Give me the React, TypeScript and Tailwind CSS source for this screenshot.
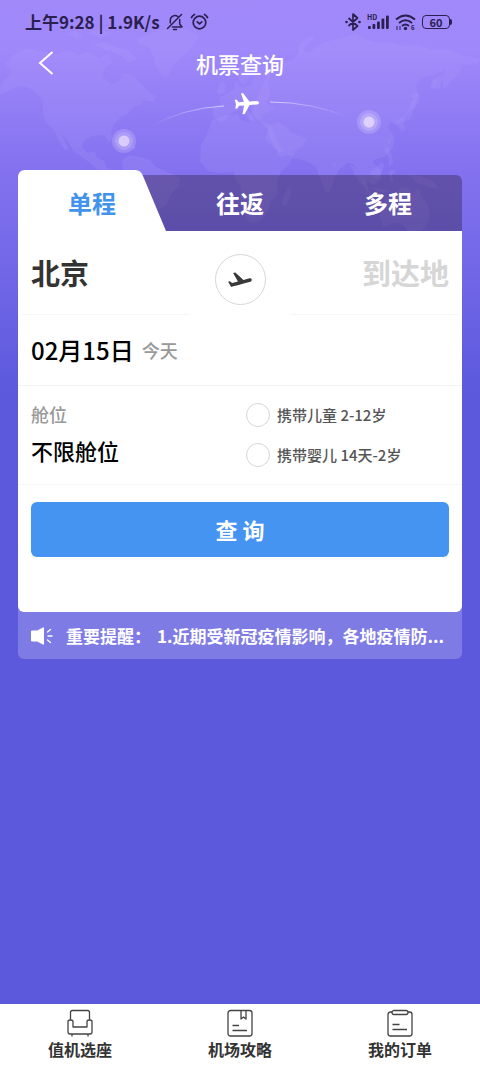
import { useState } from "react";

const TABS = ["单程", "往返", "多程"];

const PASSENGERS = [
  { id: "child", label: "携带儿童 2-12岁" },
  { id: "infant", label: "携带婴儿 14天-2岁" },
];

function WorldMap() {
  return (
    <svg viewBox="0 0 480 240" className="absolute inset-x-0 top-0 w-full" aria-hidden="true">
      <defs>
        <linearGradient id="arcLeft" x1="0" x2="1">
          <stop offset="0" stopColor="#fff" stopOpacity="0" />
          <stop offset="1" stopColor="#fff" stopOpacity="0.6" />
        </linearGradient>
        <linearGradient id="arcRight" x1="0" x2="1">
          <stop offset="0" stopColor="#fff" stopOpacity="0.6" />
          <stop offset="1" stopColor="#fff" stopOpacity="0" />
        </linearGradient>
      </defs>
      <g fill="#b9a8ff" fillOpacity="0.17">
        {/* north america */}
        <path d="M4 80l8-8-7-8 8-9 14-7 16 4 14 2 10-4 12 5 10-3 10 6 8-4 6 8-8 6-2 9 8 7 8-2 4-9 9 2 8 8 8 8 9 6-4 5-9-2-5 5-6 2-4 6-8 4-7 7-3 8 1 8-3 2-5-7-12 1-8 5-2 6 6 6 7-2 1 6 8 4 3 7 7 3-4 3-13-5-12-10-11-7-7-12-6-7 8 16-4 1-7-11-4-9-8-7-3-9 0-13-8-9-8-5-9-1-9 5-14 6z" />
        <path d="M66 34l9-3 8 4-6 4zM88 32l14-3 9 5-10 4zM92 44l12-2 12 5-8 4zM112 47l14 2 11 10-8 4-8-7-9-4z" />
        {/* greenland, iceland */}
        <path d="M138 38l20-8 26-1 16 6-6 10-10 10-9 8-6 12-5 2-7-8-4-12-4-10-10-3zM196 62l8-2 3 4-6 4z" />
        {/* caribbean */}
        <path d="M112 140l10 1 6 4-9 0zM130 146l7 1-3 3z" />
        {/* south america */}
        <path d="M122 160l8-5 10 2 9 2 6 7 12 6 13 6-1 8-8 8-5 12-9 5-4 9-6 6-3 10h-6l-1-22-6-14-9-10-3-9 4-9z" />
        {/* europe */}
        <path d="M213 116l-1-10 9-2-2-6 7-4 8-4 1-8 4 1 2 5 10-3 3-10-7 4-2 6-4-2-4-6 3-10 10-9 10-4 7 6 4 10-3 12 2 12-3 9 8 6-9 4-6 2 2 6-7-3-4-9-5-2 8 12-4 2-8-11-6 1-7 4-3 5-6 2zM216 92l5-10 4 2 1 8-6 3z" />
        {/* africa */}
        <path d="M212 120l14-5 12-1 3 6 10 3 10-2 9 3 5 12 6 12 5 6 9-2-5 11-10 10-3 10 1 11-7 8-4 11-8 9-9 1-6-11-4-14 1-11-6-9-1-6-13 1-13-2-8-10 1-16 6-11zM284 194l6-8 1 8-5 12-4-2z" />
        {/* arabia */}
        <path d="M268 126l10-4 10 7 5 5 14 4-5 9-14 8-9 2-5-12-6-11z" />
        {/* asia */}
        <path d="M270 70l8-9 14-1 8-9 9 2 9-8 14-5 13-3 10-4 10 6 12 4 14-1 12 4 16-1 14 5 16 0 14 5 18 4-4 5-15 1-2 8-9 8-7 9-3-12 5-8-13 5-11 2-6 9 4 12-5 10-9 6-3 9 3 6-4 3-5-7-7-3-2 6 7 9-2 11-9 9-8 2-4 3 9 8 0 9-8 6-6-5 1 8 5 10-5-3-5-11-4-11-6-9-6-1-9 8-6 14-3 8-4-2-5-14-4-10-9-6-14-3-8-6-7-1-5-4-8-8 3-9-8-9-8 2-4-5z" />
        <path d="M298 52l2-9 10-7 5 1-9 9-3 8zM430 88l3-9 4 1-3 9zM410 119l-6 3-8 2-2-3 9-4 6-8 3-9 5-2-2 9zM411 96l4-4 5 4-6 3zM387 141l3-3 0 7zM384 150l4-4 4 9 1 9-4 2 0-7zM333 162l3 3-2 4z" />
        {/* indonesia, oceania */}
        <path d="M350 164l7 6 8 13 0 5-8-9zM368 187l14 2 9 2-10 1zM370 172l6-4 6-6 2 4-4 12-8 0zM389 171l7-1-4 5 2 8-4-2zM410 175l9 1 12 4 9 9-8-1-8-3-7-2z" />
        <path d="M381 205l6-6 8-5 7-7 7 1 4 7 5-8 4 10 6 8 2 12-5 11-8 6-9-2-5-8-9-1-11 4-3-10zM433 80l9-5-2 14-6-1z" />
      </g>
      <path d="M148 128Q182 108 224 106" fill="none" stroke="url(#arcLeft)" />
      <path d="M270 102Q312 102 350 118" fill="none" stroke="url(#arcRight)" />
      <g fill="#e6dcff">
        <circle cx="124" cy="141" r="12" fillOpacity="0.22" />
        <circle cx="124" cy="141" r="9" fillOpacity="0.22" />
        <circle cx="124" cy="141" r="5.500" fillOpacity="0.75" />
        <circle cx="369" cy="122" r="12" fillOpacity="0.22" />
        <circle cx="369" cy="122" r="9" fillOpacity="0.25" />
        <circle cx="369" cy="122" r="5.500" fillOpacity="0.8" />
      </g>
      <path
        transform="translate(234 92) rotate(-4 12 12)"
        fill="#fff"
        d="M22.500 9.700c1.800 0 2.500.9 2.500 1.800s-.7 1.800-2.500 1.800h-7L10 22H7.700l2.300-8.700H5L3 16H1l1-4.500-1-4.500h2l2 2.700h5L7.700 1H10l5.500 8.700z"
      />
    </svg>
  );
}

function StatusBar() {
  return (
    <div className="flex h-11 items-center justify-between pr-7 pl-[25px] text-[#2a2050]">
      <div className="flex items-center gap-1.5">
        <span className="text-[17px] font-bold whitespace-nowrap">上午9:28 | 1.9K/s</span>
        <svg width="18" height="18" viewBox="0 0 18 18" fill="none" stroke="currentColor" strokeWidth="1.500" strokeLinecap="round" strokeLinejoin="round" aria-hidden="true">
          <path d="M15.500 1.500L1.500 15.500M4.300 10V7.500a4.700 4.700 0 0 1 7.500-4M13.700 6.500V11l2.300 3H6.500M7.500 16.500h3" />
        </svg>
        <svg width="19" height="18" viewBox="0 0 19 18" fill="none" stroke="currentColor" strokeWidth="1.700" strokeLinecap="round" strokeLinejoin="round" aria-hidden="true">
          <circle cx="9.500" cy="9.500" r="6.300" />
          <path d="M1.500 4.500Q2.500 2.500 4.500 1.500M17.500 4.500Q16.500 2.500 14.500 1.500M7.200 8.800l2.300 2 2.300-2" />
        </svg>
      </div>
      <div className="flex items-center gap-1.5">
        <svg width="16" height="18" viewBox="0 0 16 18" fill="none" stroke="currentColor" strokeWidth="1.700" strokeLinejoin="round" aria-hidden="true">
          <path d="M3.500 5l9 8L8 17V1l4.500 4-9 8" />
          <circle cx="1.500" cy="9" r="1.300" fill="currentColor" stroke="none" />
          <circle cx="14.500" cy="9" r="1.300" fill="currentColor" stroke="none" />
        </svg>
        <svg width="22" height="18" viewBox="0 0 22 18" fill="currentColor" aria-hidden="true">
          <text x="0" y="7" fontSize="7" fontWeight="700">HD</text>
          <rect x="1" y="13" width="2.800" height="3" rx="1" />
          <rect x="5.500" y="11" width="2.800" height="5" rx="1" />
          <rect x="10" y="8.500" width="2.800" height="7.500" rx="1" />
          <rect x="14.500" y="5.500" width="2.800" height="10.500" rx="1" />
          <rect x="19" y="2.500" width="2.800" height="13.500" rx="1" />
        </svg>
        <svg width="21" height="18" viewBox="0 0 21 18" fill="none" stroke="currentColor" strokeWidth="2" aria-hidden="true">
          <path d="M1 6.500Q10.500-1.500 20 6.500M4 10q6.500-5.500 13 0M7 13q3.500-3 7 0" />
          <circle cx="10.500" cy="15.500" r="1.700" fill="currentColor" stroke="none" />
          <path d="M2 13v4M5 13v4" strokeWidth="1" />
          <text x="16" y="17" fontSize="6" fontWeight="700" fill="currentColor" stroke="none">6</text>
        </svg>
        <div className="flex items-center">
          <div className="flex h-3.5 w-7 items-center justify-center rounded border border-current text-[11px] leading-none font-bold">
            60
          </div>
          <div className="h-1.5 w-0.5 rounded-r bg-current" />
        </div>
      </div>
    </div>
  );
}

function TripTabs() {
  const [active] = useState(0);

  return (
    <div role="tablist" className="grid grid-cols-3 items-end text-2xl font-bold text-white">
      {TABS.map((tab, i) =>
        i === active ? (
          <button key={tab} type="button" role="tab" aria-selected="true" className="relative h-[61px] pt-1 text-[#4293ec]">
            <svg viewBox="0 0 148 61" preserveAspectRatio="none" className="absolute inset-0 h-full w-full" aria-hidden="true">
              <path d="M110 5H148V61H110z" fill="#322346" fillOpacity="0.4" />
              <path d="M0 61V8Q0 0 7 0H117Q123 0 125 6L148 61z" fill="#fff" />
            </svg>
            <span className="relative">{tab}</span>
          </button>
        ) : (
          <button
            key={tab}
            type="button"
            role="tab"
            aria-selected="false"
            className="h-14 bg-[#322346]/40 last:rounded-tr-md"
          >
            {tab}
          </button>
        )
      )}
    </div>
  );
}

function SearchCard() {
  return (
    <form className="rounded-b-md bg-white pb-[55px]" onSubmit={(e) => e.preventDefault()}>
      {/* Route */}
      <div className="flex h-[84px] px-1">
        <button type="button" className="flex-1 border-b border-[#f6f6f6] pl-[9px] text-left text-[29px] font-bold text-[#333]">
          北京
        </button>
        <div className="flex w-[102px] items-end justify-center pb-2.5">
          <button type="button" aria-label="交换城市" className="flex size-[51px] items-center justify-center rounded-full border border-[#d6d6d6]">
            <svg width="28" height="28" viewBox="0 0 24 24" fill="#3a3a3a" aria-hidden="true">
              <path d="M22.070 11.640c-.21-.8-1.040-1.280-1.840-1.060L14.920 12l-6.900-6.430-1.930.51 4.140 7.170-4.970 1.330-1.970-1.540-1.450.39 2.590 4.490s7.120-1.900 16.570-4.430c.81-.23 1.280-1.050 1.070-1.850z" />
            </svg>
          </button>
        </div>
        <button type="button" className="flex-1 border-b border-[#f6f6f6] pr-[9px] text-right text-[29px] font-bold text-[#d6d6d6]">
          到达地
        </button>
      </div>

      {/* Date */}
      <button type="button" className="flex h-[71px] w-full items-center gap-2 border-b border-[#f2f2f2] px-[13px] font-medium">
        <span className="text-2xl text-black">02月15日</span>
        <span className="text-lg text-[#999]">今天</span>
      </button>

      {/* Cabin and passengers */}
      <div className="grid h-[99px] grid-cols-2 border-b border-[#f6f6f6] px-[13px] pt-4 font-medium">
        <button type="button" className="flex flex-col items-start gap-2">
          <span className="text-lg leading-6 text-[#999]">舱位</span>
          <span className="text-[22px] leading-8 text-black">不限舱位</span>
        </button>
        <div className="flex flex-col gap-4 pt-px pl-1.5">
          {PASSENGERS.map(({ id, label }) => (
            <label key={id} htmlFor={id} className="flex h-6 items-center gap-[7px] text-[15px] whitespace-nowrap text-[#555]">
              <input
                id={id}
                type="checkbox"
                className="size-6 shrink-0 appearance-none rounded-full border border-[#d6d6d6] checked:border-[#4594f2] checked:bg-[#4594f2]"
              />
              {label}
            </label>
          ))}
        </div>
      </div>

      <div className="px-[13px] pt-[17px]">
        <button type="submit" className="h-[55px] w-full rounded-md bg-[#4594f2] text-[22px] font-bold text-white">
          查 询
        </button>
      </div>
    </form>
  );
}

function Notice() {
  return (
    <div className="flex h-[47px] items-center gap-3 px-[13px] text-[17px] font-bold whitespace-nowrap text-white">
      <svg width="23" height="18" viewBox="0 0 23 18" className="shrink-0" aria-hidden="true">
        <path d="M1 3.500h5l6-3q1-.5 1 .5v16q0 1-1 .5l-6-3H1q-1 0-1-1v-9q0-1 1-1z" fill="#fff" />
        <path d="M16.500 5l3-2.500M17 9h4M16.500 13l3 2.500" stroke="#fff" strokeWidth="1.300" strokeLinecap="round" />
      </svg>
      <p className="min-w-0 flex-1 overflow-hidden">
        <span className="mr-1.5">重要提醒：</span>
        1.近期受新冠疫情影响，各地疫情防...
      </p>
    </div>
  );
}

function SeatIcon() {
  return (
    <svg width="28" height="28" viewBox="0 0 28 28" fill="none" stroke="#444" strokeWidth="1.300" strokeLinejoin="round" aria-hidden="true">
      <path d="M4.500 11V3.500Q4.500 1.500 6.500 1.500h15q2 0 2 2V11" />
      <path d="M2 12.500Q2 11 4.500 11T7 12.500V18h14v-5.500Q21 11 23.500 11T26 12.500V23q0 2-2 2H4q-2 0-2-2zM6 25v2.500M22 25v2.500" />
    </svg>
  );
}

function GuideIcon() {
  return (
    <svg width="28" height="28" viewBox="0 0 28 28" fill="none" stroke="#444" strokeWidth="1.300" strokeLinejoin="round" aria-hidden="true">
      <rect x="2" y="1.500" width="24" height="25.500" rx="2.500" />
      <path d="M15 1.500V10l2.500-2 2.500 2V1.500M6.500 16.500H13M6.500 21.500H21" />
    </svg>
  );
}

function OrderIcon() {
  return (
    <svg width="28" height="28" viewBox="0 0 28 28" fill="none" stroke="#444" strokeWidth="1.300" strokeLinejoin="round" aria-hidden="true">
      <path d="M6 3H4.500Q2 3 2 5.500v19Q2 27 4.500 27h19q2.500 0 2.500-2.500v-19Q26 3 23.500 3H22" />
      <rect x="6" y="1.500" width="16" height="4" rx="2" />
      <path d="M6.500 15.500h7M6.500 20.500h14.500" />
    </svg>
  );
}

const NAV_ITEMS = [
  { label: "值机选座", icon: SeatIcon },
  { label: "机场攻略", icon: GuideIcon },
  { label: "我的订单", icon: OrderIcon },
];

export default function App() {
  return (
    <div className="relative flex min-h-screen flex-col bg-[#5c59dd] bg-linear-[180deg,#a189fa_0px,#9f88fa_50px,#8573f0_160px,#5c59dd_390px] font-['Noto_Sans_CJK_SC',sans-serif]">
      <WorldMap />

      <div className="relative flex flex-1 flex-col">
        <StatusBar />

        <header className="grid h-[38px] grid-cols-[1fr_auto_1fr] items-center text-white">
          <button type="button" aria-label="返回" className="ml-9 w-5">
            <svg width="18" height="26" viewBox="0 0 18 26" fill="none" stroke="currentColor" strokeWidth="2" aria-hidden="true">
              <path d="M16.500 2L4 13l12.500 11" />
            </svg>
          </button>
          <h1 className="text-[22px] leading-8 font-medium">机票查询</h1>
        </header>

        <main className="flex-1 px-[18px] pt-[88px]">
          <TripTabs />
          <div className="rounded-b-md bg-[#7f7be5]">
            <SearchCard />
            <Notice />
          </div>
        </main>

        <nav className="grid h-[62px] grid-cols-3 bg-white">
          {NAV_ITEMS.map(({ label, icon: Icon }) => (
            <a key={label} href="#" className="flex flex-col items-center pt-[5px] text-base leading-6 font-bold text-[#333]">
              <Icon />
              {label}
            </a>
          ))}
        </nav>
      </div>
    </div>
  );
}
